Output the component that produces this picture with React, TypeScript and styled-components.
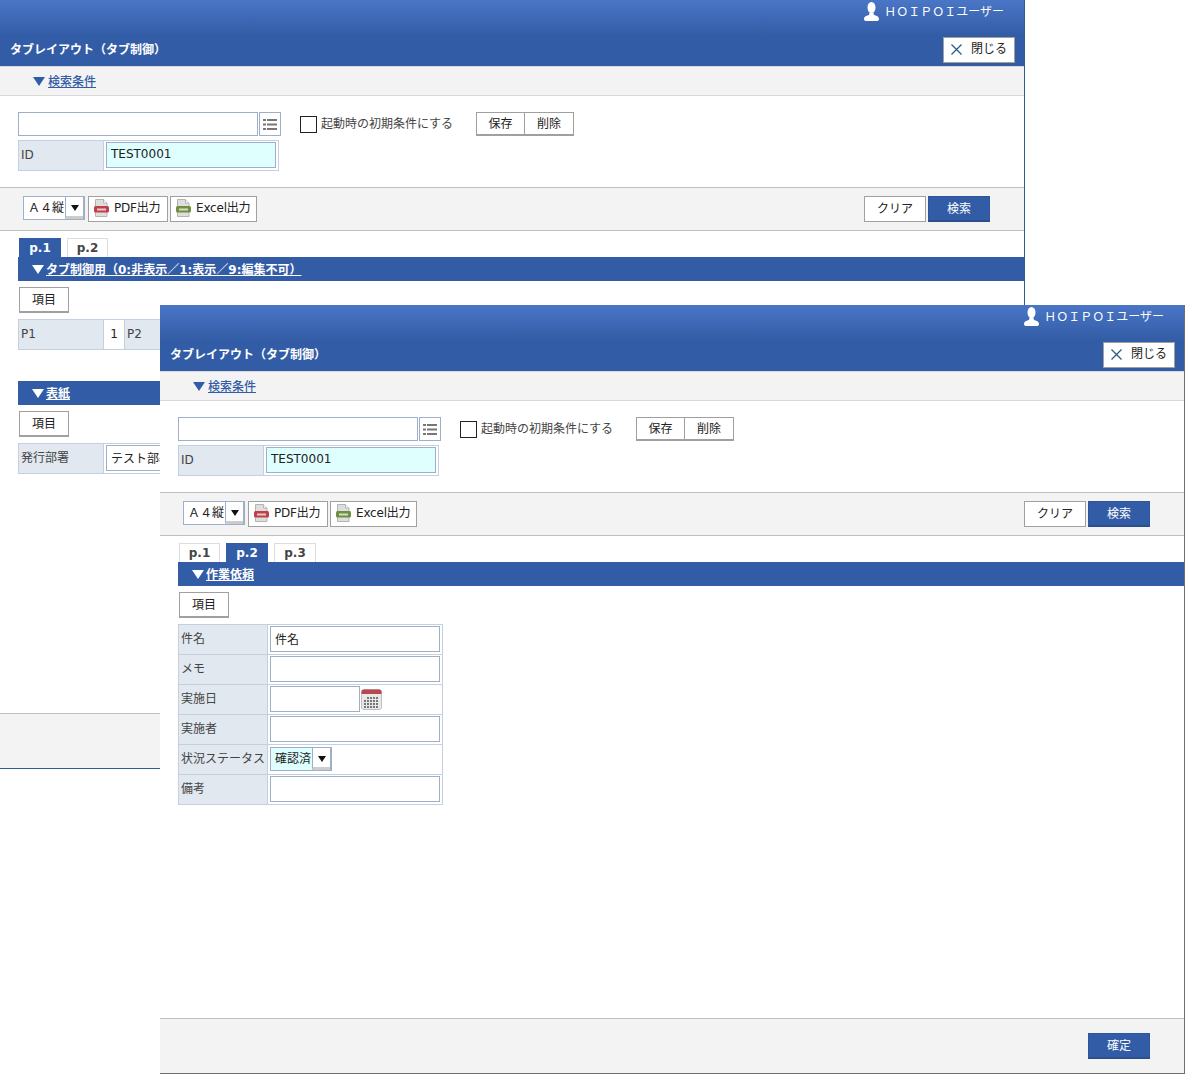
import styled, { createGlobalStyle } from "styled-components"

const GlobalStyle = createGlobalStyle`
  html, body {
    margin: 0;
    padding: 0;
    background: #fff;
  }
  body {
    width: 1186px;
    height: 1075px;
    overflow: hidden;
    position: relative;
    font-family: "DejaVu Sans", "Noto Sans CJK JP", sans-serif;
    font-size: 12px;
    line-height: 16px;
    color: #222;
  }
`

const UserIcon = () => (
  <svg width="15" height="19" viewBox="0 0 15 19">
    <ellipse cx="7.5" cy="5.5" rx="4" ry="5.500" fill="#fff" />
    <path d="M5.500 10.500 L9.500 10.500 L10 13 C12.500 13.600 15 14.600 15 17 C15 18.400 14 19 12.500 19 L2.500 19 C1 19 0 18.400 0 17 C0 14.600 2.500 13.600 5 13 Z" fill="#fff" />
  </svg>
)

const CloseIcon = () => (
  <svg width="11" height="11" viewBox="0 0 11 11">
    <path d="M0.5 0.5 L10.5 10.5 M10.5 0.5 L0.5 10.5" stroke="#2c5c80" strokeWidth="1.3" fill="none" />
  </svg>
)

const ListIcon = () => (
  <svg width="14" height="11" viewBox="0 0 14 11">
    <path d="M0 0 h3 v2 h-3 z M0 4.500 h3 v2 h-3 z M0 9 h3 v2 h-3 z M4 0 h10 v2 h-10 z M4 4.500 h10 v2 h-10 z M4 9 h10 v2 h-10 z" fill="#777" />
  </svg>
)

const FileIcon = ({ color }: { color: string }) => (
  <svg width="15" height="18" viewBox="0 0 15 18">
    <path d="M1.500 0.500 H9.500 L13 4 V17.500 H1.500 Z" fill="#dedede" stroke="#b5b5b0" />
    <path d="M9.500 0.500 V4 H13" fill="#fff" stroke="#b5b5b0" />
    <rect x="0" y="7" width="15" height="6.500" rx="1.500" fill={color} />
    <rect x="3" y="9.500" width="9" height="2" fill="#fff" opacity="0.7" />
  </svg>
)

const CalendarIcon = () => (
  <svg width="21" height="21" viewBox="0 0 21 21">
    <rect x="0.500" y="0.500" width="20" height="20" rx="2.500" fill="#e8e8e8" stroke="#c0c0c0" />
    <path d="M0.500 5 V3 A2.500 2.500 0 0 1 3 0.500 H18 A2.500 2.500 0 0 1 20.500 3 V5 Z" fill="#b9474f" />
    {[8, 11, 14, 17].map((y) =>
      [3, 6, 9, 12, 15].map((x) =>
        y === 8 && x === 3 ? null : <rect key={`${x}-${y}`} x={x} y={y} width="2" height="2" fill="#777" />
      )
    )}
  </svg>
)

const WindowFrame = styled.div<{ $left: number; $top: number; $active?: boolean }>`
  position: absolute;
  left: ${(p) => p.$left}px;
  top: ${(p) => p.$top}px;
  width: 1025px;
  height: 769px;
  box-sizing: border-box;
  display: flex;
  flex-direction: column;
  background: #fff;
  border-right: 1px solid ${(p) => (p.$active ? "#6e6e6e" : "#2a6090")};
  border-bottom: 1px solid ${(p) => (p.$active ? "#6e6e6e" : "#2a6090")};
`

const Header = styled.header`
  height: 66px;
  flex: none;
  box-sizing: border-box;
  padding: 0 9px 3px 10px;
  display: flex;
  flex-direction: column;
  justify-content: space-between;
  background: linear-gradient(#4a76c6 0, #335ca6 36px, #335ca6 100%);
  color: #fff;
`

const UserRow = styled.div`
  display: flex;
  justify-content: flex-end;
  align-items: center;
  gap: 5px;
  padding: 2px 11px 0 0;
  height: 19px;
  font-size: 12px;
`

const UserName = styled.span`
  line-height: 18px;
`

const TitleRow = styled.div`
  display: flex;
  justify-content: space-between;
  align-items: center;
`

const Title = styled.h1`
  margin: 0;
  font-size: 12px;
  line-height: 16px;
  font-weight: 700;
  color: #fff;
`

const CloseButton = styled.button`
  width: 72px;
  height: 26px;
  box-sizing: border-box;
  border: 1px solid #a0a0a0;
  background: #fff;
  display: flex;
  align-items: center;
  justify-content: center;
  gap: 9px;
  padding: 0 0 2px;
  font: inherit;
  color: #222;
`

const SearchHead = styled.div`
  height: 30px;
  flex: none;
  box-sizing: border-box;
  border-top: 1px solid #d8d8d8;
  border-bottom: 1px solid #d8d8d8;
  background: #f3f3f3;
  display: flex;
  align-items: center;
  padding: 1px 0 0 33px;
`

const FoldMark = styled.span<{ $light?: boolean }>`
  width: 0;
  height: 0;
  margin-right: ${(p) => (p.$light ? 2 : 3)}px;
  border-left: 6px solid transparent;
  border-right: 6px solid transparent;
  border-top: 9px solid ${(p) => (p.$light ? "#fff" : "#335ca6")};
`

const FoldLink = styled.a<{ $light?: boolean }>`
  font-size: 12px;
  font-weight: ${(p) => (p.$light ? 700 : 500)};
  color: ${(p) => (p.$light ? "#fff" : "#335ca6")};
  text-decoration: underline;
`

const SearchBody = styled.div`
  height: 91px;
  flex: none;
  box-sizing: border-box;
  padding: 16px 18px 0;
  display: flex;
  flex-direction: column;
  align-items: flex-start;
  gap: 4px;
`

const SearchRow = styled.div`
  display: flex;
  align-items: center;
  height: 24px;
`

const TextBox = styled.input<{ $width: number; $height?: number; $tint?: boolean }>`
  display: block;
  width: ${(p) => p.$width}px;
  height: ${(p) => p.$height ?? 26}px;
  box-sizing: border-box;
  border: 1px solid #9eb0c8;
  background: ${(p) => (p.$tint ? "#dfffff" : "#fff")};
  padding: 0 4px 2px;
  margin: 0;
  font: inherit;
  color: #222;
  outline: none;
`

const ListButton = styled.button`
  width: 22px;
  height: 24px;
  margin-left: 1px;
  box-sizing: border-box;
  border: 1px solid #9eb0c8;
  background: #fff;
  padding: 0;
  display: flex;
  align-items: center;
  justify-content: center;
`

const CheckLabel = styled.label`
  display: flex;
  align-items: center;
  gap: 4px;
  margin-left: 19px;
  width: 176px;
  color: #444;
  white-space: nowrap;
`

const CheckBox = styled.span`
  width: 17px;
  height: 17px;
  box-sizing: border-box;
  border: 1px solid #222;
  background: #fff;
`

const SegmentGroup = styled.div`
  display: flex;
  height: 24px;
  box-sizing: border-box;
  border: 1px solid #a0a0a0;
  border-bottom-width: 2px;
`

const Segment = styled.button`
  width: 47px;
  box-sizing: border-box;
  border: 0;
  background: #fff;
  padding: 0;
  font: inherit;
  color: #222;
  & + & {
    width: 49px;
    border-left: 1px solid #a0a0a0;
  }
`

const FormTable = styled.table`
  border-collapse: collapse;
  border: 1px solid #b9c8dc;
  table-layout: fixed;
`

const LabelCell = styled.td<{ $width?: number }>`
  width: ${(p) => p.$width ?? 85}px;
  height: 30px;
  box-sizing: border-box;
  padding: 0 2px 2px;
  border: 1px solid #c4d0e0;
  background: #e1e8f0;
  color: #444;
  white-space: nowrap;
  overflow: hidden;
`

const ValueCell = styled.td<{ $center?: boolean; $width?: number }>`
  ${(p) => p.$width && `width: ${p.$width}px;`}
  border: 1px solid #c4d0e0;
  padding: 0 2px 1px;
  height: 30px;
  box-sizing: border-box;
  text-align: ${(p) => (p.$center ? "center" : "left")};
`

const CellRow = styled.div`
  display: flex;
  align-items: center;
  gap: 1px;
`

const Toolbar = styled.div`
  height: 44px;
  flex: none;
  box-sizing: border-box;
  border-top: 1px solid #c0c0c0;
  border-bottom: 1px solid #c0c0c0;
  background: #f3f3f3;
  display: flex;
  align-items: flex-start;
  padding: 8px 34px 0 23px;
  gap: 2px;
`

const Spacer = styled.div`
  flex: 1;
`

const SelectBox = styled.div<{ $tint?: boolean; $width: number }>`
  width: ${(p) => p.$width}px;
  height: 24px;
  box-sizing: border-box;
  display: flex;
  border: 1px solid #9eb0c8;
  border-right-width: 2px;
  background: ${(p) => (p.$tint ? "#dfffff" : "#fff")};
  margin-right: 1px;
`

const SelectText = styled.span`
  flex: 1;
  padding-left: 4px;
  line-height: 22px;
  white-space: nowrap;
`

const SelectArrow = styled.span`
  width: 18px;
  flex: none;
  box-sizing: border-box;
  border-left: 1px solid #9eb0c8;
  border-bottom: 3px solid #ccc;
  background: #fff;
  padding-top: 2px;
  display: flex;
  align-items: center;
  justify-content: center;
  &::before {
    content: "";
    border-left: 4px solid transparent;
    border-right: 4px solid transparent;
    border-top: 6px solid #111;
  }
`

const OutputButton = styled.button<{ $width: number }>`
  width: ${(p) => p.$width}px;
  height: 26px;
  box-sizing: border-box;
  border: 1px solid #a0a0a0;
  background: #fff;
  display: flex;
  align-items: center;
  gap: 5px;
  padding: 0 0 2px 5px;
  font: inherit;
  letter-spacing: -0.2px;
  color: #222;
  white-space: nowrap;
`

const PlainButton = styled.button<{ $width: number; $primary?: boolean }>`
  width: ${(p) => p.$width}px;
  height: 26px;
  flex: none;
  box-sizing: border-box;
  border: 1px solid ${(p) => (p.$primary ? "#2f5698" : "#a0a0a0")};
  ${(p) => p.$primary && "border-bottom: 2px solid #2b4f8c;"}
  background: ${(p) => (p.$primary ? "#335ca6" : "#fff")};
  color: ${(p) => (p.$primary ? "#fff" : "#222")};
  padding: 0;
  font: inherit;
`

const Main = styled.main`
  flex: 1;
  min-height: 0;
  overflow: hidden;
  padding: 7px 0 0 18px;
`

const TabList = styled.div`
  display: flex;
  height: 19px;
  gap: 6px;
  padding-left: 1px;
`

const Tab = styled.div<{ $selected?: boolean; $last?: boolean }>`
  width: ${(p) => (p.$selected || p.$last ? 42 : 41)}px;
  box-sizing: border-box;
  text-align: center;
  font-weight: 700;
  font-size: 12px;
  line-height: 19px;
  background: ${(p) => (p.$selected ? "#335ca6" : "#fff")};
  color: ${(p) => (p.$selected ? "#fff" : "#444")};
  border: 1px solid ${(p) => (p.$selected ? "#335ca6" : "#ddd")};
  border-bottom: 0;
`

const SectionBar = styled.div`
  height: 24px;
  box-sizing: border-box;
  display: flex;
  align-items: center;
  padding: 1px 0 0 14px;
  background: #335ca6;
`

const ItemButton = styled.button`
  display: block;
  width: 50px;
  height: 26px;
  box-sizing: border-box;
  margin: 6px 0 6px 1px;
  border: 1px solid #a0a0a0;
  border-bottom-width: 2px;
  background: #fff;
  padding: 0;
  font: inherit;
  color: #222;
`

const SectionBlock = styled.section`
  margin-bottom: 31px;
`

const Footer = styled.footer`
  height: 55px;
  flex: none;
  border-top: 1px solid #c0c0c0;
  background: #f3f3f3;
  display: flex;
  justify-content: flex-end;
  padding: 14px 34px 0 0;
  box-sizing: border-box;
`

const SearchArea = () => (
  <>
    <SearchHead>
      <FoldMark />
      <FoldLink>検索条件</FoldLink>
    </SearchHead>
    <SearchBody>
      <SearchRow>
        <TextBox $width={240} $height={24} />
        <ListButton>
          <ListIcon />
        </ListButton>
        <CheckLabel>
          <CheckBox />
          起動時の初期条件にする
        </CheckLabel>
        <SegmentGroup>
          <Segment>保存</Segment>
          <Segment>削除</Segment>
        </SegmentGroup>
      </SearchRow>
      <FormTable>
        <tbody>
          <tr>
            <LabelCell>ID</LabelCell>
            <ValueCell>
              <TextBox $width={170} $tint defaultValue="TEST0001" />
            </ValueCell>
          </tr>
        </tbody>
      </FormTable>
    </SearchBody>
    <Toolbar>
      <SelectBox $width={62}>
        <SelectText>Ａ４縦</SelectText>
        <SelectArrow />
      </SelectBox>
      <OutputButton $width={80}>
        <FileIcon color="#c0404a" />
        PDF出力
      </OutputButton>
      <OutputButton $width={87}>
        <FileIcon color="#6f9040" />
        Excel出力
      </OutputButton>
      <Spacer />
      <PlainButton $width={62}>クリア</PlainButton>
      <PlainButton $width={62} $primary>検索</PlainButton>
    </Toolbar>
  </>
)

const Window = ({
  left,
  top,
  active,
  tabs,
  selected,
  children,
}: {
  left: number
  top: number
  active?: boolean
  tabs: string[]
  selected: number
  children: React.ReactNode
}) => (
  <WindowFrame $left={left} $top={top} $active={active}>
    <Header>
      <UserRow>
        <UserIcon />
        <UserName>ＨＯＩＰＯＩユーザー</UserName>
      </UserRow>
      <TitleRow>
        <Title>タブレイアウト（タブ制御）</Title>
        <CloseButton>
          <CloseIcon />
          閉じる
        </CloseButton>
      </TitleRow>
    </Header>
    <SearchArea />
    <Main>
      <TabList>
        {tabs.map((t, i) => (
          <Tab key={t} $selected={i === selected} $last={i === 2}>
            {t}
          </Tab>
        ))}
      </TabList>
      {children}
    </Main>
    <Footer>
      <PlainButton $width={62} $primary>確定</PlainButton>
    </Footer>
  </WindowFrame>
)

export default function App() {
  return (
    <>
      <GlobalStyle />
      <Window left={0} top={0} tabs={["p.1", "p.2"]} selected={0}>
        <SectionBlock>
          <SectionBar>
            <FoldMark $light />
            <FoldLink $light>タブ制御用（0:非表示／1:表示／9:編集不可）</FoldLink>
          </SectionBar>
          <ItemButton>項目</ItemButton>
          <FormTable>
            <tbody>
              <tr>
                <LabelCell>P1</LabelCell>
                <ValueCell $center $width={21}>1</ValueCell>
                <LabelCell>P2</LabelCell>
                <ValueCell $center $width={21}>1</ValueCell>
              </tr>
            </tbody>
          </FormTable>
        </SectionBlock>
        <SectionBar>
          <FoldMark $light />
          <FoldLink $light>表紙</FoldLink>
        </SectionBar>
        <ItemButton>項目</ItemButton>
        <FormTable>
          <tbody>
            <tr>
              <LabelCell>発行部署</LabelCell>
              <ValueCell>
                <TextBox $width={170} defaultValue="テスト部署" />
              </ValueCell>
            </tr>
          </tbody>
        </FormTable>
      </Window>

      <Window left={160} top={305} active tabs={["p.1", "p.2", "p.3"]} selected={1}>
        <SectionBar>
          <FoldMark $light />
          <FoldLink $light>作業依頼</FoldLink>
        </SectionBar>
        <ItemButton>項目</ItemButton>
        <FormTable>
          <tbody>
            <tr>
              <LabelCell $width={89}>件名</LabelCell>
              <ValueCell>
                <TextBox $width={170} defaultValue="件名" />
              </ValueCell>
            </tr>
            <tr>
              <LabelCell $width={89}>メモ</LabelCell>
              <ValueCell>
                <TextBox $width={170} />
              </ValueCell>
            </tr>
            <tr>
              <LabelCell $width={89}>実施日</LabelCell>
              <ValueCell>
                <CellRow>
                  <TextBox $width={90} />
                  <CalendarIcon />
                </CellRow>
              </ValueCell>
            </tr>
            <tr>
              <LabelCell $width={89}>実施者</LabelCell>
              <ValueCell>
                <TextBox $width={170} />
              </ValueCell>
            </tr>
            <tr>
              <LabelCell $width={89}>状況ステータス</LabelCell>
              <ValueCell>
                <SelectBox $width={62} $tint>
                  <SelectText>確認済</SelectText>
                  <SelectArrow />
                </SelectBox>
              </ValueCell>
            </tr>
            <tr>
              <LabelCell $width={89}>備考</LabelCell>
              <ValueCell>
                <TextBox $width={170} />
              </ValueCell>
            </tr>
          </tbody>
        </FormTable>
      </Window>
    </>
  )
}
